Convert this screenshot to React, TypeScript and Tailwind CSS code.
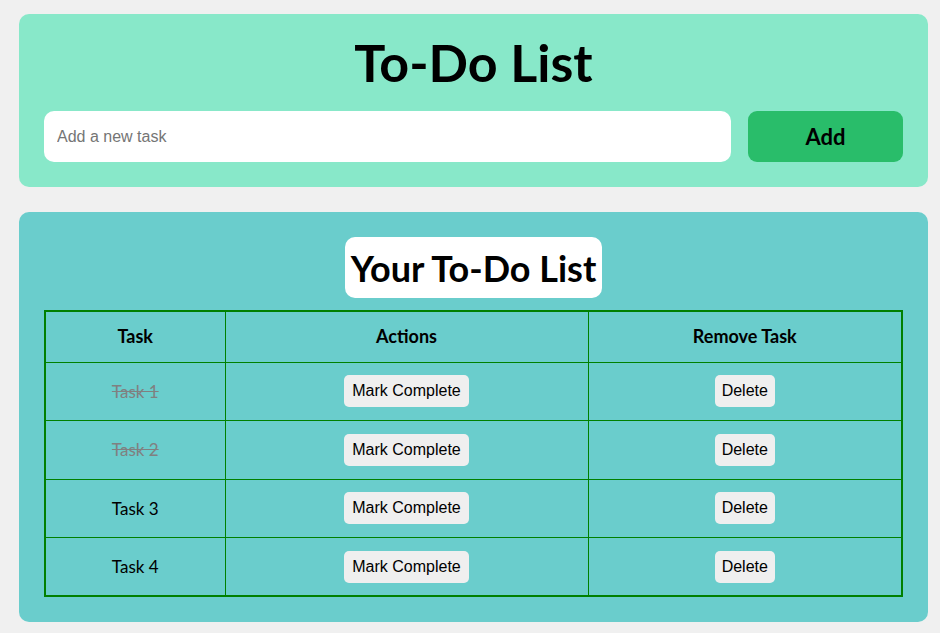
import React, { useState } from 'react';

type Task = { id: number; text: string; done: boolean };

const initialTasks: Task[] = [
  { id: 1, text: 'Task 1', done: true },
  { id: 2, text: 'Task 2', done: true },
  { id: 3, text: 'Task 3', done: false },
  { id: 4, text: 'Task 4', done: false },
];

const App = () => {
  const [tasks, setTasks] = useState<Task[]>(initialTasks);
  const [input, setInput] = useState('');

  const addTask = () => {
    if (!input.trim()) return;
    setTasks([...tasks, { id: Date.now(), text: input.trim(), done: false }]);
    setInput('');
  };

  return (
    <div className="min-h-screen bg-[#f0f0f0] pl-[19px] pr-[12px] pt-[14px] pb-[12px] font-['Lato',sans-serif] text-black">
      {/* Input card */}
      <div className="rounded-[10px] bg-[#88e8c9] px-[25px] pt-[22px] pb-[25px]">
        <h1 className="text-center text-[52px] font-bold leading-none">To-Do List</h1>
        <div className="mt-[23px] flex gap-[17px]">
          <input
            value={input}
            onChange={(e) => setInput(e.target.value)}
            placeholder="Add a new task"
            className="h-[51px] flex-1 rounded-[10px] bg-white px-[13px] font-['Liberation_Sans',Arial,sans-serif] text-[16px] text-black outline-none placeholder:text-[#757575]"
          />
          <button
            onClick={addTask}
            className="h-[51px] w-[155px] rounded-[9px] bg-[#29bd6a] text-[22px] font-bold"
          >
            Add
          </button>
        </div>
      </div>

      {/* List card */}
      <div className="mt-[25px] rounded-[10px] bg-[#6acdcc] px-[25px] pt-[25px] pb-[25px]">
        <div className="flex justify-center">
          <h2 className="flex h-[61px] items-center rounded-[10px] bg-white px-[6px] text-[36px] font-bold">
            Your To-Do List
          </h2>
        </div>

        <table className="mt-[12px] w-full border-collapse border-2 border-[#008000] text-center">
          <thead>
            <tr className="h-[51px]">
              <th className="w-[180px] border border-[#008000] text-[18px] font-bold">Task</th>
              <th className="w-[363px] border border-[#008000] text-[18px] font-bold">Actions</th>
              <th className="border border-[#008000] text-[18px] font-bold">Remove Task</th>
            </tr>
          </thead>
          <tbody>
            {tasks.map((task) => (
              <tr key={task.id} className="h-[58.5px]">
                <td
                  className={`border border-[#008000] text-[17px] ${
                    task.done ? 'text-[#808080] line-through' : ''
                  }`}
                >
                  {task.text}
                </td>
                <td className="border border-[#008000]">
                  <button
                    onClick={() =>
                      setTasks(tasks.map((t) => (t.id === task.id ? { ...t, done: !t.done } : t)))
                    }
                    className="h-[32px] rounded-[5px] bg-[#efefef] px-[8px] font-['Liberation_Sans',Arial,sans-serif] text-[16px]"
                  >
                    Mark Complete
                  </button>
                </td>
                <td className="border border-[#008000]">
                  <button
                    onClick={() => setTasks(tasks.filter((t) => t.id !== task.id))}
                    className="h-[32px] rounded-[5px] bg-[#efefef] px-[7px] font-['Liberation_Sans',Arial,sans-serif] text-[16px]"
                  >
                    Delete
                  </button>
                </td>
              </tr>
            ))}
          </tbody>
        </table>
      </div>
    </div>
  );
};

export default App;
